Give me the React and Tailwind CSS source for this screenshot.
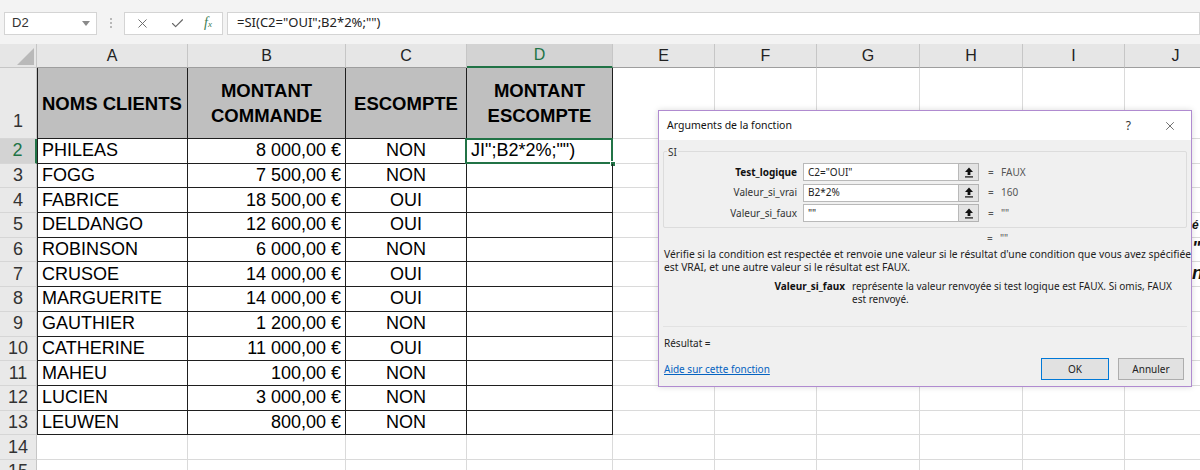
import { X, Check } from "lucide-react";

const COLS = [
  { key: "A", w: "w-[151px]" },
  { key: "B", w: "w-[158px]" },
  { key: "C", w: "w-[121px]" },
  { key: "D", w: "w-[146px]" },
  { key: "E", w: "w-[102px]" },
  { key: "F", w: "w-[102px]" },
  { key: "G", w: "w-[103px]" },
  { key: "H", w: "w-[103px]" },
  { key: "I", w: "w-[102px]" },
  { key: "J", w: "w-[102px]" },
];

const DATA = [
  ["PHILEAS", "8 000,00 €", "NON"],
  ["FOGG", "7 500,00 €", "NON"],
  ["FABRICE", "18 500,00 €", "OUI"],
  ["DELDANGO", "12 600,00 €", "OUI"],
  ["ROBINSON", "6 000,00 €", "NON"],
  ["CRUSOE", "14 000,00 €", "OUI"],
  ["MARGUERITE", "14 000,00 €", "OUI"],
  ["GAUTHIER", "1 200,00 €", "NON"],
  ["CATHERINE", "11 000,00 €", "OUI"],
  ["MAHEU", "100,00 €", "NON"],
  ["LUCIEN", "3 000,00 €", "NON"],
  ["LEUWEN", "800,00 €", "NON"],
];

function RowHead({ n, active, tall }) {
  return (
    <div
      className={`w-[37px] shrink-0 flex justify-center border-b border-[#d6d6d6] text-[18px] ${
        tall ? "items-end pb-[3px]" : "items-center"
      } ${
        active
          ? "bg-[#d3d3d3] text-[#217346] border-r-2 border-r-[#217346]"
          : "bg-[#e9e9e9] text-[#333] border-r border-r-[#c6c6c6]"
      }`}
    >
      {n}
    </div>
  );
}

function FormulaBar() {
  return (
    <div className="h-[44px] bg-[#f3f3f3] flex items-center pl-[4px] pt-[2px]">
      <div className="w-[93px] h-[23px] bg-white border border-[#d4d4d4] flex items-center justify-between pl-[7px] pr-[6px] text-[13px] text-[#333]">
        <span>D2</span>
        <svg width="8" height="5" viewBox="0 0 8 5">
          <path d="M0 0 L8 0 L4 5 Z" fill="#8a8a8a" />
        </svg>
      </div>
      <div className="w-[27px] flex flex-col items-center gap-[2px]">
        <span className="w-[2px] h-[2px] bg-[#b8b8b8]" />
        <span className="w-[2px] h-[2px] bg-[#b8b8b8]" />
        <span className="w-[2px] h-[2px] bg-[#b8b8b8]" />
      </div>
      <div className="w-[99px] h-[23px] bg-white border border-[#d4d4d4] flex items-center justify-between px-[10px]">
        <X size={15} strokeWidth={1.5} color="#666" />
        <Check size={15} strokeWidth={1.8} color="#666" />
        <span className="font-['Liberation_Serif',serif] italic text-[14px] text-[#3c7d52] leading-none">
          f<span className="text-[9px]">x</span>
        </span>
      </div>
      <div className="ml-[4px] flex-1 h-[23px] bg-white border border-[#d4d4d4] flex items-center pl-[9px] text-[13px] text-[#222] font-['Noto_Sans',sans-serif]">
        =SI(C2="OUI";B2*2%;"")
      </div>
    </div>
  );
}

function ColumnHeader() {
  return (
    <div className="flex h-[24px] bg-[#e6e6e6]">
      <div className="w-[37px] shrink-0 border-r border-b border-[#c6c6c6] flex items-end justify-end pr-[2px] pb-[2px]">
        <svg width="17" height="17" viewBox="0 0 17 17">
          <path d="M17 0 L17 17 L0 17 Z" fill="#b9b9b9" />
        </svg>
      </div>
      {COLS.map((c) => (
        <div
          key={c.key}
          className={`${c.w} shrink-0 flex items-center justify-center text-[16px] border-r border-[#c6c6c6] ${
            c.key === "D"
              ? "bg-[#d3d3d3] text-[#217346] border-b-2 border-b-[#217346]"
              : "text-[#222] border-b border-b-[#9e9e9e]"
          }`}
        >
          {c.key}
        </div>
      ))}
    </div>
  );
}

function HeaderRow() {
  const heads = ["NOMS CLIENTS", "MONTANT\nCOMMANDE", "ESCOMPTE", "MONTANT\nESCOMPTE"];
  return (
    <div className="flex h-[71px]">
      <RowHead n="1" tall />
      {COLS.map((c, i) =>
        i < 4 ? (
          <div
            key={c.key}
            className={`${c.w} shrink-0 bg-[#bfbfbf] border-r border-b border-[#1f1f1f] ${
              i === 0 ? "border-l border-l-[#1f1f1f] justify-start pl-[4px]" : "justify-center"
            } flex items-center text-center font-bold text-[18.5px] leading-[25px] whitespace-pre-line text-black`}
          >
            {heads[i]}
          </div>
        ) : (
          <div key={c.key} className={`${c.w} shrink-0 border-r border-b border-[#dadada]`} />
        )
      )}
    </div>
  );
}

function DataRow({ n, row }) {
  const edge = "border-r border-b border-[#1f1f1f]";
  return (
    <div className="flex h-[24.7px] text-[18px] text-black">
      <RowHead n={n} active={n === 2} />
      {COLS.map((c, i) => {
        if (row && i === 0)
          return (
            <div key={c.key} className={`${c.w} shrink-0 ${edge} border-l border-l-[#1f1f1f] flex items-center pl-[4px]`}>
              {row[0]}
            </div>
          );
        if (row && i === 1)
          return (
            <div key={c.key} className={`${c.w} shrink-0 ${edge} flex items-center justify-end pr-[4px]`}>
              {row[1]}
            </div>
          );
        if (row && i === 2)
          return (
            <div key={c.key} className={`${c.w} shrink-0 ${edge} flex items-center justify-center`}>
              {row[2]}
            </div>
          );
        if (row && i === 3)
          return (
            <div key={c.key} className={`${c.w} shrink-0 ${edge} relative flex items-center pl-[4px]`}>
              {n === 2 && (
                <>
                  <span>JI";B2*2%;"")</span>
                  <div className="absolute inset-[-1px] left-[-2px] border-2 border-[#217346]" />
                  <div className="absolute right-[-4px] bottom-[-4px] w-[6px] h-[6px] bg-[#217346] border border-white" />
                </>
              )}
            </div>
          );
        return <div key={c.key} className={`${c.w} shrink-0 border-r border-b border-[#dadada]`} />;
      })}
    </div>
  );
}

function RefIcon() {
  return (
    <svg width="10" height="11" viewBox="0 0 10 11">
      <path d="M5 0.5 L9 5 H6.4 V8 H3.6 V5 H1 Z" fill="#111" />
      <rect x="1" y="9.3" width="8" height="1.2" fill="#111" />
    </svg>
  );
}

function Field({ label, value, result, bold }) {
  return (
    <div className="flex items-center h-[18px]">
      <div className={`w-[139px] text-right pr-[6px] ${bold ? "font-bold text-[#111]" : "text-[#333]"}`}>{label}</div>
      <div className="w-[156px] h-[18px] bg-white border border-[#b9b9b9] flex items-center pl-[4px] text-[#222]">
        {value}
      </div>
      <div className="w-[20px] h-[18px] bg-[#e3e3e3] border border-[#b3b3b3] border-l-0 flex items-center justify-center">
        <RefIcon />
      </div>
      <div className="ml-[9px] w-[13px] text-[#555]">=</div>
      <div className="text-[#555]">{result}</div>
    </div>
  );
}

function Dialog() {
  return (
    <div className="absolute left-[658px] top-[110px] w-[534px] h-[277px] border border-[#b08bd0] bg-[#f0f0f0] shadow-[0_0_6px_rgba(0,0,0,0.15)] font-['Noto_Sans',sans-serif] text-[10px] text-[#222]">
      <div className="h-[29px] bg-white flex items-center justify-between pl-[8px] pr-[14px]">
        <span className="text-[10.5px] text-[#111]">Arguments de la fonction</span>
        <div className="flex items-center gap-[32px] text-[#333]">
          <span className="text-[12px]">?</span>
          <X size={14} strokeWidth={1.2} color="#333" />
        </div>
      </div>
      <div className="px-[4px]">
        <div className="relative mt-[11px] h-[77px] border border-[#dcdcdc] rounded-[2px] pt-[11px] flex flex-col gap-[2.5px]">
          <span className="absolute top-[-7px] left-[3px] bg-[#f0f0f0] px-[1px] text-[#333]">SI</span>
          <Field label="Test_logique" value={'C2="OUI"'} result="FAUX" bold />
          <Field label="Valeur_si_vrai" value="B2*2%" result="160" />
          <Field label="Valeur_si_faux" value={'""'} result={'""'} />
        </div>
        <div className="ml-[324px] mt-[3px] h-[14px] flex items-center text-[#555]">
          <span className="w-[13px]">=</span>
          <span>""</span>
        </div>
        <div className="mt-[3px] pl-[1px] leading-[13px] whitespace-nowrap text-[10.3px]">
          Vérifie si la condition est respectée et renvoie une valeur si le résultat d'une condition que vous avez spécifiée
          <br />
          est VRAI, et une autre valeur si le résultat est FAUX.
        </div>
        <div className="mt-[6px] flex leading-[13px]">
          <div className="w-[182px] text-right font-bold text-[#111] shrink-0">Valeur_si_faux</div>
          <div className="ml-[7px] whitespace-nowrap">
            représente la valeur renvoyée si test logique est FAUX. Si omis, FAUX
            <br />
            est renvoyé.
          </div>
        </div>
        <div className="mt-[20px] border-t border-[#e2e2e2]" />
        <div className="mt-[10px] pl-[1px] leading-[13px]">Résultat =</div>
        <div className="mt-[8px] flex items-center justify-between pr-[3px]">
          <span className="pl-[1px] text-[#0563c1] underline">Aide sur cette fonction</span>
          <div className="flex gap-[9px]">
            <div className="w-[68px] h-[22px] bg-[#e1e1e1] border border-[#0078d7] flex items-center justify-center">OK</div>
            <div className="w-[66px] h-[22px] bg-[#e1e1e1] border border-[#adadad] flex items-center justify-center">Annuler</div>
          </div>
        </div>
      </div>
    </div>
  );
}

export default function App() {
  return (
    <div className="relative w-[1200px] h-[470px] overflow-hidden bg-white font-['Liberation_Sans',Arial,sans-serif]">
      <FormulaBar />
      <ColumnHeader />
      <HeaderRow />
      {DATA.map((row, i) => (
        <DataRow key={i} n={i + 2} row={row} />
      ))}
      <DataRow n={14} />
      <DataRow n={15} />
      <Dialog />
      <div className="absolute left-[1192px] top-[214px] font-bold italic text-[18px] leading-[25px] text-[#111]">
        <div className="text-[12px] leading-[22px]">é</div>
        <div>"l</div>
        <div>n</div>
      </div>
    </div>
  );
}
